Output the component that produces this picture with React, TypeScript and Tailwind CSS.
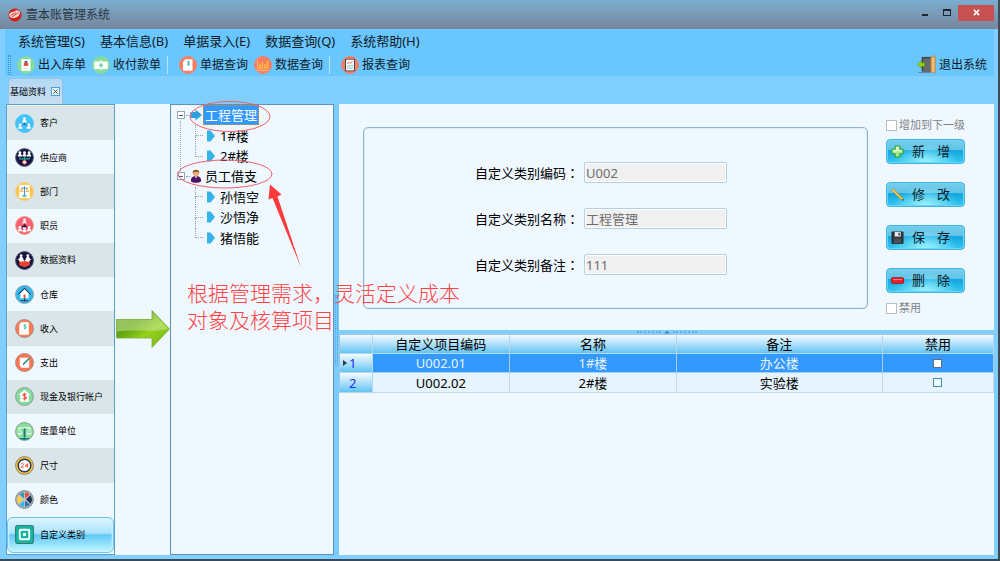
import React from 'react';

type IconProps = { className?: string };

const RING = 'M10 .6a9.4 9.4 0 1 0 0 18.8A9.4 9.4 0 0 0 10 .6z';

function Disc({ fill, ring, size, children }: { fill: string; ring?: string; size: 'sm' | 'md'; children: React.ReactNode }) {
  return (
    <svg viewBox="0 0 20 20" className={size === 'sm' ? 'size-[18px] shrink-0' : 'size-[19px] shrink-0'} aria-hidden="true">
      <path d={RING} fill={fill} stroke={ring ?? fill} strokeWidth="1" />
      {children}
    </svg>
  );
}

const Person = ({ x, y, c = '#fff' }: { x: number; y: number; c?: string }) => (
  <g fill={c}>
    <circle cx={x} cy={y} r="1.5" />
    <path d={`M${x - 2.2} ${y + 4}c0-2.4 1-2.6 2.2-2.6s2.2.2 2.2 2.6z`} />
  </g>
);

const icons = {
  customer: (
    <Disc fill="#46c3fb" size="md">
      <path d="M10 9v3M6 13l4-3 4 3" stroke="#1c6fa8" fill="none" />
      <Person x={10} y={5} />
      <Person x={5.5} y={11.5} />
      <Person x={14.5} y={11.5} />
    </Disc>
  ),
  supplier: (
    <Disc fill="#17153f" ring="#55607e" size="md">
      <Person x={5.2} y={5} />
      <Person x={10} y={5} />
      <Person x={14.8} y={5} />
      <path d="M5 10v1.5h10V10M10 9.500v4" stroke="#1fb29a" fill="none" strokeWidth="1.2" />
      <circle cx="10" cy="15" r="2" fill="#fff" stroke="#e8504c" />
    </Disc>
  ),
  department: (
    <Disc fill="#fdc64b" ring="#f3cf7a" size="md">
      <path d="M4.500 3h11v14h-11z" fill="#fff" />
      <path d="M10 4.500v9M6.500 6.500h7M8 14h4" stroke="#3b8fb0" fill="none" />
      <path d="M5.500 10l1.500-3.500L8.500 10zM11.500 10L13 6.500l1.500 3.500z" fill="none" stroke="#e8a04a" strokeWidth=".8" />
      <path d="M8 15.500h4" stroke="#37bfa0" />
    </Disc>
  ),
  staff: (
    <Disc fill="#fb5f77" ring="#ee9a72" size="md">
      <Person x={10} y={4} />
      <Person x={5.2} y={12} />
      <Person x={10} y={13} />
      <Person x={14.8} y={12} />
      <path d="M10 8v4M7 12l3-2.500 3 2.500" stroke="#4a1a33" fill="none" strokeWidth="1.400" />
    </Disc>
  ),
  data: (
    <Disc fill="#17153f" ring="#4a4f70" size="md">
      <Person x={6.500} y={5} />
      <Person x={13.500} y={5} />
      <path d="M4.500 9.500l5.500 1.500 5.500-1.500v5.500L10 17l-5.500-2z" fill="#f0402f" />
      <path d="M2.800 8.500l5.200-.500 2 2.500 2-2.500 5.200.500-2.700 2.700L10 10.800l-4.500.400z" fill="#fff" />
    </Disc>
  ),
  warehouse: (
    <Disc fill="#35b8ec" ring="#7f9aa8" size="md">
      <path d="M4.200 9.500L10 4l5.800 5.500h-1.500V14H5.700V9.500z" fill="#fff" />
      <path d="M3.600 9.800L10 3.600l6.400 6.200" fill="none" stroke="#1b3a5c" strokeWidth="1.200" />
      <path d="M9 10h2v4H9z" fill="#ef4b3a" />
      <path d="M6 16.500h8M10 14v3.500" stroke="#1b3a5c" />
    </Disc>
  ),
  income: (
    <Disc fill="#fd7c55" ring="#a58578" size="md">
      <path d="M6.500 3.500h8v13h-10v-11z" fill="#fff" />
      <path d="M4.500 5.500h2v-2z" fill="#d5dfe2" />
      <path d="M11.700 6.600c-.5-.7-2.400-.7-2.400.4 0 1.300 2.500.6 2.500 2 0 1.200-2.200 1.200-2.700.3M10.500 5.300v5.600" stroke="#1fb29a" fill="none" strokeWidth=".8" />
    </Disc>
  ),
  expense: (
    <Disc fill="#fd7650" ring="#a58578" size="md">
      <path d="M5 5h10v10.500H7L5 13.500z" fill="#fff" />
      <path d="M9 11.500L15.800 5" stroke="#2b8f98" strokeWidth="1.700" />
      <path d="M8 12.800l1.800-.6-1-1z" fill="#333" />
    </Disc>
  ),
  cash: (
    <Disc fill="#86dc9c" ring="#8a9f93" size="md">
      <path d="M10 3l6.200 5.500h-1.700v7h-9v-7H3.800z" fill="#fff" />
      <path d="M12 7.800c-.8-1-3.700-.9-3.700.7 0 1.900 3.800.9 3.800 2.900 0 1.700-3.200 1.600-4 .4M10.200 6v8.300" stroke="#ef4b3a" fill="none" strokeWidth="1.100" />
    </Disc>
  ),
  unit: (
    <Disc fill="#8adf9f" ring="#7d9a8a" size="md">
      <path d="M4 16.800h12a9.400 9.400 0 0 1-12 0z" fill="#1b7f80" />
      <path d="M10 5v11.500" stroke="#1b6f80" strokeWidth="1.800" />
      <path d="M3.500 7c2-2 4.500.500 6.500-1.500 2 2 4.500-.500 6.500 1.500" stroke="#f3fbf4" fill="none" strokeWidth="1.200" />
      <path d="M2.600 11.500h5c-.3 2.400-4.700 2.400-5 0zM12.400 11.500h5c-.3 2.400-4.700 2.400-5 0z" fill="#fff" />
      <path d="M2.800 11.500L4.700 7l2.300 4.500M13 11.500L15.300 7l2 4.500" stroke="#e8f7ea" fill="none" strokeWidth=".7" />
    </Disc>
  ),
  size: (
    <Disc fill="#f9c63e" ring="#88806a" size="md">
      <circle cx="10" cy="10" r="6.600" fill="#fff" stroke="#25384f" strokeWidth="1.600" />
      <path d="M6.300 8.700c.5-1.200 2.700-1 2.600.3 0 1-1.700 1.500-2.500 2.800h2.700M13.200 12V8l-2.500 2.700h3.400" stroke="#ef4b3a" fill="none" strokeWidth="1" />
    </Disc>
  ),
  color: (
    <Disc fill="#a4adb6" ring="#848d96" size="md">
      <circle cx="10" cy="10" r="7.500" fill="#bcc6ce" />
      <path d="M9.500 9V2.500a7.500 7.500 0 0 0-5 2.300z" fill="#2a9db0" />
      <path d="M10.500 9V2.500a7.500 7.500 0 0 1 5 2.300z" fill="#e8473a" />
      <path d="M8.500 9.700L3.800 5.500a7.500 7.500 0 0 0 0 9z" fill="#f5cf4a" />
      <path d="M11.500 9.700l4.700-4.200a7.500 7.500 0 0 1 0 9z" fill="#24364f" />
      <path d="M9.500 11v6.500a7.500 7.500 0 0 1-5-2.300z" fill="#39b9e8" />
      <path d="M10.500 11v6.500a7.500 7.500 0 0 0 5-2.300z" fill="#2f6fb0" />
    </Disc>
  ),
  custom: (
    <svg viewBox="0 0 20 20" className="size-[19px] shrink-0" aria-hidden="true">
      <rect x=".5" y=".5" width="19" height="19" rx="2" fill="#12b5a0" stroke="#37736c" />
      <rect x="5" y="5" width="10" height="10" rx="1" fill="#12b5a0" stroke="#fff" strokeWidth="2" />
      <rect x="8.500" y="8.500" width="3" height="3" fill="#fff" />
    </svg>
  ),
};

const stockIcon = (
  <Disc fill="#86dc9c" size="sm">
    <path d="M5 3.500h10v13H5z" fill="#fff" />
    <path d="M7.500 7.500h5V11h-5z" fill="#ef4b3a" />
    <path d="M8.500 5.500h3v2h-3z" fill="#3b5568" />
    <path d="M7 13.500h6" stroke="#d3dadd" />
  </Disc>
);
const payIcon = (
  <Disc fill="#86dc9c" size="sm">
    <path d="M2.500 6h7v8.500h-7zM10.500 6h7v8.500h-7z" fill="#fff" />
    <path d="M9 5h2v2H9zM9 13.500h2v2H9z" fill="#fff" />
    <path d="M7.500 10.200h5M10 8.500v3.500" stroke="#4fc3a0" strokeWidth="1.200" />
  </Disc>
);
const billIcon = (
  <Disc fill="#fd7c62" size="sm">
    <path d="M7 3.500h8v13H4.500V6z" fill="#fff" />
    <path d="M4.500 6H7V3.500z" fill="#cfe0e6" />
    <path d="M11.700 6.600c-.5-.7-2.400-.7-2.400.4 0 1.300 2.500.6 2.500 2 0 1.200-2.200 1.200-2.700.3M10.500 5.300v5.600" stroke="#1fb29a" fill="none" strokeWidth=".9" />
  </Disc>
);
const chartIcon = (
  <Disc fill="#fd7c62" size="sm">
    <path d="M4 4v12h12.500" stroke="#fcc76a" fill="none" />
    <path d="M6.500 14.500V9.500M9.300 14.500V7M12.200 14.500V9M15 14.500V5" stroke="#fcc23f" strokeWidth="1.700" />
  </Disc>
);
const reportIcon = (
  <Disc fill="#fd7c62" size="sm">
    <rect x="4.500" y="3" width="11" height="14" rx="1" fill="#24415c" />
    <path d="M5.500 4h9v12h-9z" fill="#fff" />
    <path d="M7 8.500l2-1.500 1.500 1L13 6" stroke="#ef4b3a" fill="none" />
    <path d="M6.500 11h7M6.500 13.500h7" stroke="#8fd8bf" strokeWidth="1.500" />
  </Disc>
);

const ExitIcon = () => (
  <svg viewBox="0 0 20 20" className="size-[19px] shrink-0" aria-hidden="true">
    <path d="M5 2h11v15.500H5z" fill="#3f4348" />
    <path d="M6.500 3.500h8v14h-8z" fill="#66696d" />
    <path d="M14.500 2.500L19.300.5v18.500l-4.800-1z" fill="#e0a052" stroke="#b87a35" strokeWidth=".5" />
    <path d="M15.800 3l2.300-.800v15.500l-2.300-.500z" fill="#f0c07c" />
    <path d="M1.500 18.500h13" stroke="#6f7b86" />
    <path d="M.5 10l4-4v2.200H8v3.600H4.500V14z" fill="#94d313" stroke="#5c9a0a" strokeWidth=".6" />
  </svg>
);

const AppLogo = () => (
  <svg viewBox="0 0 14 14" className="size-[14px]" aria-hidden="true">
    <circle cx="7" cy="7" r="6.500" fill="#d41d1a" />
    <path d="M1 7C2 3.500 5 4.500 7 3c2-1.500 4.500-.5 5 1.500 0 3-3 5-5.500 5.500S1.500 9.500 1 7z" fill="#fbe9e6" opacity=".9" />
    <path d="M2.500 7.500l5.500-3M4 9l6.500-4.500" stroke="#d41d1a" strokeWidth=".8" />
  </svg>
);

const menus = ['系统管理(S)', '基本信息(B)', '单据录入(E)', '数据查询(Q)', '系统帮助(H)'];

const sections: { label: string; icon: React.ReactNode }[] = [
  { label: '客户', icon: icons.customer },
  { label: '供应商', icon: icons.supplier },
  { label: '部门', icon: icons.department },
  { label: '职员', icon: icons.staff },
  { label: '数据资料', icon: icons.data },
  { label: '仓库', icon: icons.warehouse },
  { label: '收入', icon: icons.income },
  { label: '支出', icon: icons.expense },
  { label: '现金及银行帐户', icon: icons.cash },
  { label: '度量单位', icon: icons.unit },
  { label: '尺寸', icon: icons.size },
  { label: '颜色', icon: icons.color },
  { label: '自定义类别', icon: icons.custom },
];

function ToolButton({ icon, label }: { icon: React.ReactNode; label: string }) {
  return (
    <button type="button" className="flex items-center gap-[3px] text-xs text-[#0c1a26]">
      {icon}
      {label}
    </button>
  );
}

const Divider = () => <span className="mr-[5px] h-[18px] w-px bg-[#b9e2fb]" />;

function TitleBar() {
  return (
    <header className="flex h-[29px] items-center bg-linear-to-b from-[#7badd2] to-[#76869a] pr-1 pl-2">
      <AppLogo />
      <h1 className="ml-1 flex-1 text-xs text-[#2b3540]">壹本账管理系统</h1>
      <button type="button" aria-label="最小化" className="mb-1 flex h-4 w-[22px] items-center justify-center">
        <span className="mt-1 h-[2px] w-1.5 bg-[#1d2731]" />
      </button>
      <button type="button" aria-label="最大化" className="mb-1 flex h-4 w-[22px] items-center justify-center">
        <span className="h-[7px] w-2 border border-t-2 border-[#1d2731]" />
      </button>
      <button type="button" aria-label="关闭" className="mb-1 flex h-4 w-9 items-center justify-center bg-[#c75050]">
        <svg viewBox="0 0 8 8" className="size-[7px]" aria-hidden="true">
          <path d="M1 1l6 6M7 1L1 7" stroke="#fff" strokeWidth="1.800" />
        </svg>
      </button>
    </header>
  );
}

function Toolbars() {
  return (
    <div className="mr-1 ml-[5px] bg-[#6ac6ff]">
      <nav className="flex h-6 items-center gap-[15px] pl-[13px]">
        {menus.map((m) => (
          <button key={m} type="button" className="text-[13px] leading-6 text-[#0c1a26]">
            {m}
          </button>
        ))}
      </nav>
      <div className="flex h-[23px] items-center gap-1.5 pr-[7px] pl-[3px]">
        <span className="h-5 w-[3px] border-x border-dotted border-[#3f8fc4]" />
        <ToolButton icon={stockIcon} label="出入库单" />
        <ToolButton icon={payIcon} label="收付款单" />
        <Divider />
        <ToolButton icon={billIcon} label="单据查询" />
        <ToolButton icon={chartIcon} label="数据查询" />
        <Divider />
        <ToolButton icon={reportIcon} label="报表查询" />
        <span className="flex-1" />
        <ToolButton icon={<ExitIcon />} label="退出系统" />
      </div>
    </div>
  );
}

function Sidebar() {
  return (
    <nav className="flex w-[109px] shrink-0 flex-col border border-[#5b9fcb] bg-[#eff7ff] py-px">
      {sections.map((s, i) => {
        const selected = i === sections.length - 1;
        const tone = selected
          ? 'rounded-md border border-[#6cc5ef] bg-[linear-gradient(to_bottom,#dff5fe_0%,#a9e2fb_45%,#5fc8f7_50%,#c4f6fe_100%)] shadow-[inset_0_0_2px_1px_#d6f4fe] px-[7px]'
          : i % 2 === 0
            ? 'bg-[#dae5ea] px-2'
            : 'px-2';
        return (
          <button key={s.label} type="button" className={`flex min-h-0 flex-1 items-center gap-1.5 text-[9px] text-black ${tone}`}>
            {s.icon}
            <span className="whitespace-nowrap">{s.label}</span>
          </button>
        );
      })}
    </nav>
  );
}

const GreenArrow = () => (
  <svg viewBox="0 0 54 40" className="h-10 w-[54px]" aria-hidden="true">
    <defs>
      <linearGradient id="leaf" x1="0" y1="0" x2="1" y2="1">
        <stop offset="0" stopColor="#5d9c16" />
        <stop offset=".35" stopColor="#5ea30f" />
        <stop offset=".6" stopColor="#97d11c" />
        <stop offset="1" stopColor="#6fb012" />
      </linearGradient>
    </defs>
    <path d="M.5 10.500H36V1.500L53.500 20 36 38.500v-9.500H.5z" fill="url(#leaf)" stroke="#7cae3a" strokeWidth=".8" />
    <path d="M1 11h35.500V3L52 19.500C40 24 26 20 1 22.500z" fill="#cfe8a6" opacity=".5" />
  </svg>
);

const BlueArrow = () => (
  <svg viewBox="0 0 12 12" className="size-3 shrink-0" aria-hidden="true">
    <path d="M.5 3H5.500V.5L12 6l-6.500 5.500V9H.5z" fill="#2f9fe0" />
  </svg>
);

const UserIcon = ({ className }: IconProps) => (
  <svg viewBox="0 0 12 14" className={className} aria-hidden="true">
    <path d="M1 12.500C.5 8 3.500 7 6 7s5.500 1 5 5.500c-2 1.700-8 1.700-10 0z" fill="#4b1560" />
    <path d="M4.800 7.300L6 9.500l1.200-2.200z" fill="#fff" />
    <circle cx="6" cy="4" r="3.200" fill="#e7b07c" />
    <path d="M2.700 4C2.300-.5 9.700-.5 9.300 4 8 2.600 5 2.400 2.700 4z" fill="#8a4f1c" />
  </svg>
);

function Leaf({ label, last }: { label: string; last?: boolean }) {
  return (
    <li className="flex min-h-0 items-center pl-6">
      <span className="flex h-full w-2 flex-col">
        <span className="flex-1 border-b border-l border-dotted border-[#9aa3ad]" />
        <span className={last ? 'flex-1' : 'flex-1 border-l border-dotted border-[#9aa3ad]'} />
      </span>
      <svg viewBox="0 0 8 12" className="mx-1 h-3 w-2 shrink-0" aria-hidden="true">
        <path d="M0 .5h3.500L8 6l-4.500 5.500H0z" fill="#35b4ea" />
      </svg>
      <span className="ml-px">{label}</span>
    </li>
  );
}

const Expander = () => (
  <button type="button" aria-label="折叠" className="mr-px flex size-2 items-center justify-center border border-[#98a5b3] bg-white">
    <span className="h-px w-1 bg-[#3c5a90]" />
  </button>
);

function TreePanel() {
  return (
    <section className="relative w-[164px] shrink-0 border border-[#5b93b8] bg-[#eff7ff]">
      <ul className="grid h-[143px] auto-rows-fr text-[13px] leading-5 text-black">
        <li className="flex min-h-0 items-center pl-1.5">
          <Expander />
          <span className="w-1 border-b border-dotted border-[#9aa3ad]" />
          <BlueArrow />
          <span className="ml-px border border-dotted border-[#d98a3a] bg-[#3399ff] px-px leading-[18px] text-white">工程管理</span>
        </li>
        <Leaf label="1#楼" />
        <Leaf label="2#楼" last />
        <li className="flex min-h-0 items-center pl-1.5">
          <Expander />
          <span className="w-1 border-b border-dotted border-[#9aa3ad]" />
          <UserIcon className="h-[14px] w-3 shrink-0" />
          <span className="ml-[3px]">员工借支</span>
        </li>
        <Leaf label="孙悟空" />
        <Leaf label="沙悟净" />
        <Leaf label="猪悟能" last />
      </ul>
      <span className="absolute top-4 left-[9px] h-[52px] border-l border-dotted border-[#9aa3ad]" />
      <svg viewBox="0 0 164 170" className="pointer-events-none absolute -top-1 left-0 z-10 h-[170px] w-[164px]" aria-hidden="true">
        <ellipse cx="59" cy="15.500" rx="40" ry="15" fill="none" stroke="#f0606a" />
        <ellipse cx="54" cy="73" rx="47" ry="14" fill="none" stroke="#f0606a" />
        <path d="M99 83.500L97.500 98.500l4-1.500L130 166.500 106.500 95.500l4-2z" fill="#fb3b3b" />
      </svg>
      <p className="pointer-events-none absolute top-[175px] left-4 z-10 text-[21px] leading-[27px] font-light whitespace-nowrap text-[#ff4444]">
        根据管理需求，灵活定义成本
        <br />
        对象及核算项目
      </p>
    </section>
  );
}

function Field({ id, label, value }: { id: string; label: string; value: string }) {
  return (
    <div className="flex items-center">
      <label htmlFor={id} className="w-[109px] text-[13px] leading-5 whitespace-nowrap text-black">
        {label}
        <span className="font-['Noto_Sans_CJK_TC']">：</span>
      </label>
      <input
        id={id}
        disabled
        defaultValue={value}
        className="h-[21px] w-[143px] rounded-xs border border-[#b3cfe2] bg-[#f0f0f0] px-px text-[13px] text-[#6d6d6d] shadow-[inset_0_0_0_1px_#fff]"
      />
    </div>
  );
}

function Check({ label }: { label: string }) {
  return (
    <label className="flex h-[14px] items-center gap-0.5 text-[11px] whitespace-nowrap text-[#838383]">
      <input type="checkbox" disabled className="size-[11px] appearance-none border border-[#bcbcbc] bg-white" />
      {label}
    </label>
  );
}

function ActionButton({ first, second, icon }: { first: string; second: string; icon: React.ReactNode }) {
  return (
    <button
      type="button"
      className="flex h-[25px] w-[79px] items-center rounded-sm border border-[#3fb4e6] bg-[radial-gradient(ellipse_at_bottom,#9ff4ff_0%,transparent_60%),linear-gradient(to_bottom,#79cdea_0%,#5fc4e8_42%,#12a5df_46%,#35c9f0_100%)] pl-1 text-[13px] text-[#0c1a26] shadow-[inset_0_0_0_1px_#6fd4f3]"
    >
      {icon}
      <span className="ml-2">{first}</span>
      <span className="ml-3">{second}</span>
    </button>
  );
}

const plus = (
  <svg viewBox="0 0 14 14" className="size-[13px]" aria-hidden="true">
    <path d="M4.500 1h5v3.500H13v5H9.500V13h-5V9.500H1v-5h3.500z" fill="#a5e88a" stroke="#2c9a1e" strokeLinejoin="round" />
    <path d="M5.500 2h3v3.500H12V7H2V5.500h3.500z" fill="#dcf9cd" />
  </svg>
);
const pencil = (
  <svg viewBox="0 0 14 14" className="size-[13px]" aria-hidden="true">
    <path d="M1.500 1.500l11 11" stroke="#b9801a" strokeWidth="2.800" />
    <path d="M1.500 1.500L12 12" stroke="#ffd650" strokeWidth="1.500" />
    <path d="M11.500 13l2.300.8-.7-2.300z" fill="#4a3a20" />
  </svg>
);
const disk = (
  <svg viewBox="0 0 14 14" className="size-[13px]" aria-hidden="true">
    <path d="M1 1h12v12.500H1z" fill="#32373c" stroke="#202428" strokeWidth=".8" />
    <path d="M4 1h6.500v5H4z" fill="#e6eaed" />
    <path d="M8 1.800h1.500v3H8z" fill="#32373c" />
    <path d="M3 8h8v5H3z" fill="#4c5157" />
  </svg>
);
const minus = (
  <svg viewBox="0 0 14 14" className="size-[13px]" aria-hidden="true">
    <rect x=".5" y="4" width="13" height="6" rx="1" fill="#e8202a" stroke="#b80d18" />
    <path d="M2 6h10" stroke="#ff8f90" />
  </svg>
);

function EditForm() {
  return (
    <form className="flex bg-[#eff7ff] pt-[14px] pr-[29px] pb-[15px] pl-6">
      <div className="mt-[9px] mb-[6px] flex flex-1 flex-col gap-[25px] rounded-[5px] border border-[#8db2d2] pt-[34px] pl-[111px] shadow-[inset_0_0_0_1px_#dcebf8]">
        <Field id="code" label="自定义类别编码" value="U002" />
        <Field id="name" label="自定义类别名称" value="工程管理" />
        <Field id="note" label="自定义类别备注" value="111" />
      </div>
      <div className="ml-[18px] w-[79px]">
        <Check label="增加到下一级" />
        <div className="mt-[7px] mb-2 flex flex-col gap-[18px]">
          <ActionButton first="新" second="增" icon={plus} />
          <ActionButton first="修" second="改" icon={pencil} />
          <ActionButton first="保" second="存" icon={disk} />
          <ActionButton first="删" second="除" icon={minus} />
        </div>
        <Check label="禁用" />
      </div>
    </form>
  );
}

const rows = [
  { code: 'U002.01', name: '1#楼', note: '办公楼' },
  { code: 'U002.02', name: '2#楼', note: '实验楼' },
];

const HEAD = 'border-r border-b border-[#b5d6ef] bg-linear-to-b from-[#f4fbff] to-[#5fc4f3] p-0 font-normal';

function ItemTable() {
  return (
    <table className="w-full table-fixed border-separate border-spacing-0 border-t border-l border-[#a9c3dc] text-center text-[13px] leading-[18px] text-black">
      <thead>
        <tr>
          <th className={`w-[5%] ${HEAD}`} aria-label="序号" />
          <th className={`w-[21%] ${HEAD}`}>自定义项目编码</th>
          <th className={`w-[25.5%] ${HEAD}`}>名称</th>
          <th className={`w-[31.5%] ${HEAD}`}>备注</th>
          <th className={`w-[17%] ${HEAD}`}>禁用</th>
        </tr>
      </thead>
      <tbody>
        {rows.map((r, i) => {
          const cell =
            i === 0
              ? 'h-[19px] border-r border-b border-[#a5cdf5] bg-[#3399ff] p-0 text-[#e6f3ff]'
              : 'h-5 border-r border-b border-[#c3d9ee] bg-[#e6f4fd] p-0';
          return (
            <tr key={r.code}>
              <th scope="row" className={`${HEAD} text-[#1a2cf0]`}>
                <span className="flex items-center pl-[3px]">
                  <svg viewBox="0 0 4 8" className="h-2 w-1" aria-hidden="true">
                    {i === 0 && <path d="M0 1l4 3-4 3z" fill="#2b3a48" />}
                  </svg>
                  <span className="ml-0.5">{i + 1}</span>
                </span>
              </th>
              <td className={cell}>{r.code}</td>
              <td className={cell}>{r.name}</td>
              <td className={cell}>{r.note}</td>
              <td className={cell}>
                <input
                  type="checkbox"
                  aria-label={`禁用 ${r.name}`}
                  className={`mx-auto block size-[9px] appearance-none border ${i === 0 ? 'border-[#5f6f7f] bg-white' : 'border-[#3f8fc0] bg-[#f2fbff]'}`}
                />
              </td>
            </tr>
          );
        })}
      </tbody>
    </table>
  );
}

export default function App() {
  return (
    <div className="flex min-h-screen flex-col border-r-2 border-b-2 border-r-[#3d4a58] border-b-[#39485a] bg-[#80cfff] font-['Noto_Sans','Noto_Sans_CJK_SC',sans-serif]">
      <TitleBar />
      <Toolbars />
      <div className="flex h-7 items-end pl-2">
        <div className="flex h-[26px] items-center gap-[5px] rounded-t border border-b-0 border-[#96c3e2] bg-linear-to-b from-[#b3d9f5] to-[#c9ddf0] px-px">
          <button type="button" className="text-[9px] whitespace-nowrap text-black">
            基础资料
          </button>
          <button type="button" aria-label="关闭标签" className="mr-px flex size-[9px] items-center justify-center border border-[#4a9fd8] bg-[#e6f4fd]">
            <svg viewBox="0 0 6 6" className="size-[5px]" aria-hidden="true">
              <path d="M.5.5l5 5M5.500.5l-5 5" stroke="#333" />
            </svg>
          </button>
        </div>
      </div>
      <main className="mr-1 mb-1 ml-1.5 flex flex-1">
        <Sidebar />
        <div className="flex w-[55px] shrink-0 flex-col items-start bg-[#eff7ff] pt-[205px] pl-px">
          <GreenArrow />
        </div>
        <TreePanel />
        <div className="flex w-[5px] shrink-0 flex-col items-center justify-center bg-[#78ccff]">
          <span className="h-[70px] w-[3px] border-x border-dotted border-[#4f9fe0]" />
        </div>
        <section className="flex min-w-0 flex-1 flex-col">
          <EditForm />
          <div className="flex h-1 items-center justify-center gap-[3px]">
            <span className="w-6 border-t-2 border-dotted border-[#5fb0ea]" />
            <svg viewBox="0 0 6 4" className="h-1 w-1.5" aria-hidden="true">
              <path d="M0 3.500L3 .5l3 3z" fill="#4488dd" />
            </svg>
            <span className="w-6 border-t-2 border-dotted border-[#5fb0ea]" />
          </div>
          <div className="flex-1 bg-[#eff7ff]">
            <ItemTable />
          </div>
        </section>
      </main>
    </div>
  );
}
